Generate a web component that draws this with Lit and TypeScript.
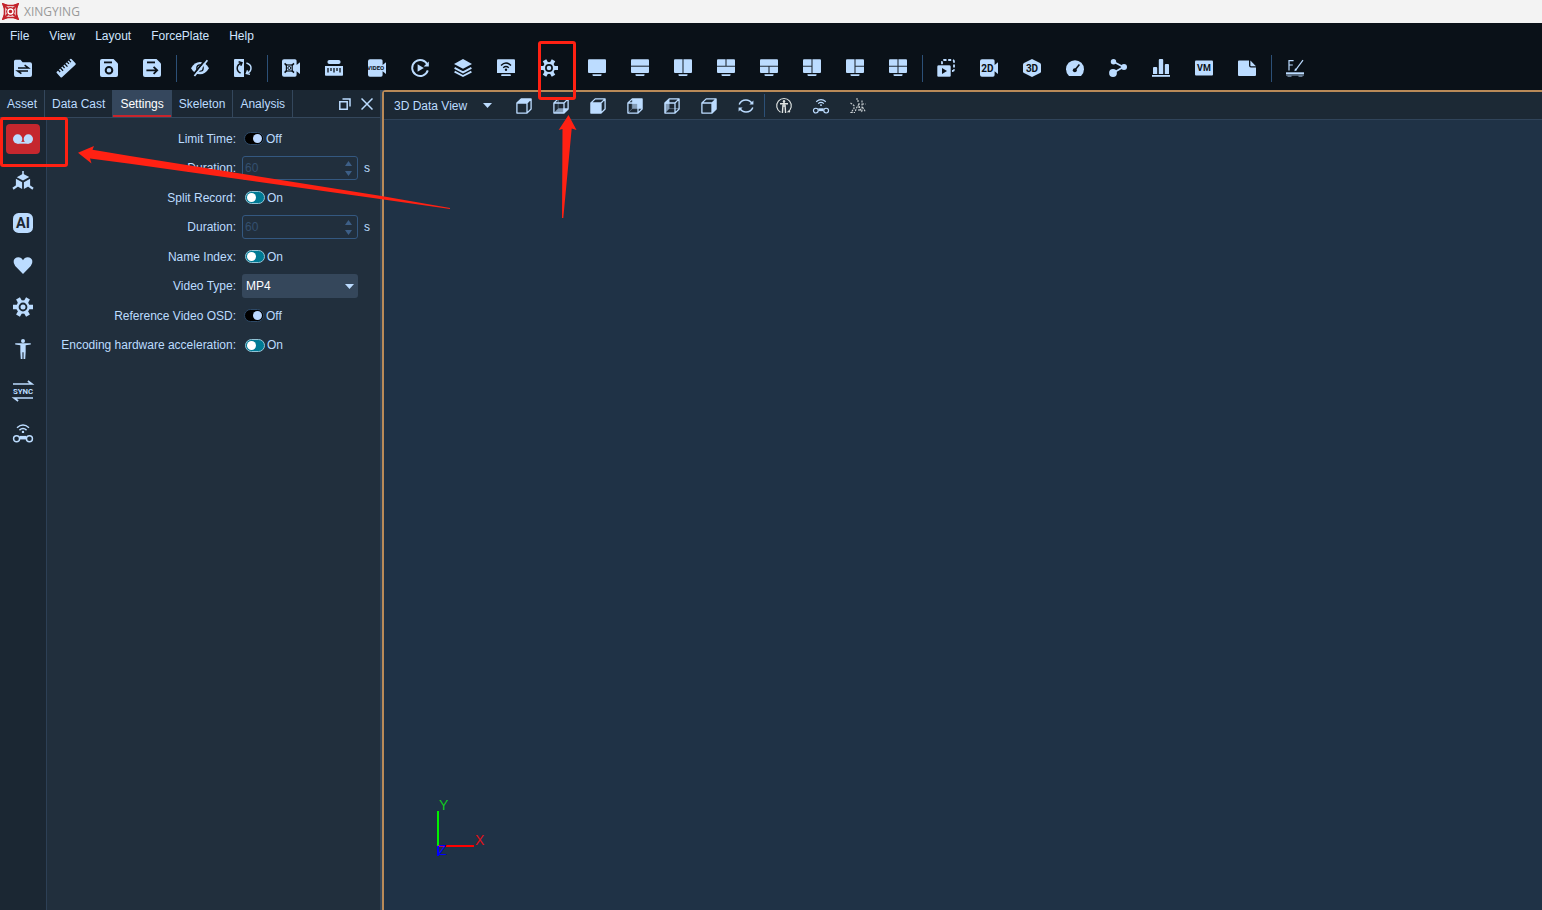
import { LitElement, html, svg, css, nothing, TemplateResult } from "lit";
import { customElement, property } from "lit/decorators.js";
import { classMap } from "lit/directives/class-map.js";

const gear = svg`
  <circle cx="9" cy="9" r="6" fill="currentColor"/>
  <g stroke="currentColor" stroke-width="4" stroke-linejoin="round">
    <path d="M0 9H18M4.5 1.2L13.5 16.8M13.5 1.2L4.5 16.8"/>
  </g>
  <circle cx="9" cy="9" r="3.1" fill="currentColor" stroke="var(--hole)" stroke-width="1.7"/>`;

const monitor = (lines: string) => svg`
  <rect y="0.3" width="18" height="13.7" rx="1" fill="currentColor"/>
  <path d="${lines}" stroke="var(--hole)" stroke-width="1.1" opacity=".85"/>
  <path d="M4.5 15.2h9v0.8q0 1-1 1h-7q-1 0-1-1z" fill="currentColor"/>`;

const cameraBody = svg`<path d="M2 0.2h11q1.600 0 1.600 1.600V6L18 3.200V15l-3.400-2.800V16q0 1.800-1.600 1.800H2q-2 0-2-2V2.200Q0 .2 2 .2z" fill="currentColor"/>`;

const linkedBalls = svg`
  <path d="M3.600 4.200Q9-.6 14.400 4.200M5.800 6.400Q9 3.600 12.200 6.400" fill="none" stroke="currentColor" stroke-width="1.300"/>
  <circle cx="9" cy="8" r="1.100" fill="currentColor"/>
  <path d="M6 11.600h6v3.200H6z" fill="currentColor"/>
  <g fill="var(--hole)" stroke="currentColor" stroke-width="1.300">
    <circle cx="3.200" cy="14.200" r="2.700"/><circle cx="14.800" cy="14.200" r="2.700"/>
  </g>`;

const cubeEdges = svg`<path d="M.9 5L5.200.9H15.100V11L11 15.100H.9zM.9 5H11V15M11 5L15.100.9" fill="none" stroke="currentColor" stroke-width="1.300" stroke-linejoin="round"/>`;
const cube = (face: string) => svg`<path d="${face}" fill="currentColor"/>${cubeEdges}`;
const glassCube = (face: string) => svg`
  <path d="${face}" fill="currentColor"/>
  <path d="M5.200 1v9.600H15M5.200 10.600L1 15" stroke="currentColor" fill="none" opacity=".5"/>
  <path d="M1.500 5.500H10.500V14.500H1.500z" fill="var(--hole)" opacity=".35"/>
  ${cubeEdges}`;

const icons: Record<string, TemplateResult> = {
  folder: svg`
    <path d="M1.500.8h5L8.600 3.200H16q2 0 2 2V16q0 2-2 2H2q-2 0-2-2V2.300Q0 .8 1.500.8z" fill="currentColor"/>
    <path d="M4 8.900h10.400L10.600 6.200M14 11.900H3.600L7.400 14.600" fill="none" stroke="var(--hole)" stroke-width="1.500"/>`,
  ruler: svg`
    <g transform="rotate(-43 9 9)">
      <rect x="-1.200" y="5.400" width="20.400" height="7.600" rx="1" fill="currentColor"/>
      <path d="M2 5v3M5 5v4M8 5v3M11 5v4M14 5v3M16.600 5v3" stroke="var(--hole)" stroke-width="1.300"/>
    </g>`,
  save: svg`
    <path d="M2 0h11.500L18 4.500V16q0 2-2 2H2q-2 0-2-2V2Q0 0 2 0z" fill="currentColor"/>
    <path d="M4 3.400h8" stroke="var(--hole)" stroke-width="1.800"/>
    <circle cx="9" cy="11.300" r="3.300" fill="none" stroke="var(--hole)" stroke-width="2"/>`,
  saveAs: svg`
    <path d="M2 0h11.500L18 4.500V16q0 2-2 2H2q-2 0-2-2V2Q0 0 2 0z" fill="currentColor"/>
    <path d="M4 3.400h8" stroke="var(--hole)" stroke-width="1.800"/>
    <path d="M3.400 11.300H14M10.600 7.800l3.600 3.500-3.600 3.500" fill="none" stroke="var(--hole)" stroke-width="1.800"/>`,
  hidden: svg`
    <path d="M0 9.200Q3.600 3 9 3q5.400 0 9 6.200-3.600 6-9 6-5.400 0-9-6z" fill="currentColor"/>
    <circle cx="9" cy="9" r="3.200" fill="none" stroke="var(--hole)" stroke-width="1.300"/>
    <path d="M2 16.200L14.600.6" stroke="var(--hole)" stroke-width="2"/>
    <path d="M3.400 17L16.400 1.200" stroke="currentColor" stroke-width="1.800"/>`,
  flip: svg`
    <path d="M1 0h9v18H1q-1 0-1-1V1q0-1 1-1z" fill="currentColor"/>
    <path d="M7.600 4Q3.200 5.400 3.200 9.200q0 3.400 3.400 4.800M4.600 2.800l3.400 1-1.200 3" fill="none" stroke="var(--hole)" stroke-width="1.500"/>
    <path d="M12.400 4Q17 5.400 17 9q0 3.800-4 5.200M16 15.400l-3.600-1 1.200-3" fill="none" stroke="currentColor" stroke-width="1.500"/>`,
  calibrate: svg`${cameraBody}
    <path d="M2.600 4.400L12 13.600M12 4.400L2.600 13.600" stroke="var(--hole)" stroke-width="1.500"/>
    <rect x="4.400" y="6" width="5.800" height="6" fill="currentColor" stroke="var(--hole)" stroke-width="1.200"/>
    <circle cx="7.300" cy="9" r="1.500" fill="currentColor" stroke="var(--hole)" stroke-width="1"/>`,
  caliper: svg`
    <rect x="2.400" y="1" width="13.200" height="4" rx="2" fill="currentColor"/>
    <path d="M0 7h18v9q0 .8-.8.8H.8Q0 16.800 0 16z" fill="currentColor"/>
    <path d="M3 9v4.500M6 9v3M9 9v4.500M12 9v3M15 9v4.500" stroke="var(--hole)" stroke-width="1.300"/>`,
  video: svg`${cameraBody}<text class="glyph" x="7.600" y="11.300" font-size="6">VIDEO</text>`,
  replay: svg`
    <path d="M16.600 6A8 8 0 1 0 16.800 11.400" fill="none" stroke="currentColor" stroke-width="1.900"/>
    <path d="M17.800 2.400V7.600H12.600z" fill="currentColor"/>
    <path d="M6.600 5.200L12.800 9l-6.200 3.800z" fill="currentColor"/>`,
  layers: svg`
    <path d="M9 0l9 4.900-9 4.900L0 4.900z" fill="currentColor"/>
    <path d="M.6 8.900L9 13.400l8.400-4.500M.6 12.700L9 17l8.400-4.300" fill="none" stroke="currentColor" stroke-width="1.900"/>`,
  wireless: svg`
    <path d="M1 .3h16q1 0 1 1V14H0V1.300Q0 .3 1 .3z" fill="currentColor"/>
    <path d="M4 6.400Q9 1.600 14 6.400M6.200 8.800q2.800-2.400 5.600 0" fill="none" stroke="var(--hole)" stroke-width="1.400"/>
    <circle cx="9" cy="10.800" r="1.200" fill="var(--hole)"/>
    <path d="M5 16.200h8" stroke="currentColor" stroke-width="1.700" stroke-linecap="round"/>`,
  gear,
  view1: monitor("M0 0"),
  view2h: monitor("M0 7.200H18"),
  view2v: monitor("M9 0V14"),
  view3t: monitor("M0 7.200H18M9 0V7"),
  view3b: monitor("M0 7.200H18M9 7V14"),
  view3l: monitor("M9 0V14M0 7.200H9"),
  view3r: monitor("M9 0V14M9 7.200H18"),
  view4: monitor("M9 0V14M0 7.200H18"),
  clip: svg`
    <rect x="5" y="1" width="12" height="11" rx="1.500" fill="none" stroke="currentColor" stroke-width="1.800" stroke-dasharray="3 1.700"/>
    <rect y="6" width="14" height="12" rx="1.600" fill="currentColor" stroke="var(--hole)" stroke-width=".6"/>
    <path d="M5 9l5 3-5 3z" fill="var(--hole)"/>`,
  cam2d: svg`${cameraBody}<text class="glyph" x="7.400" y="12.600" font-size="10">2D</text>`,
  hex3d: svg`
    <path d="M9 0l8 4q1 .6 1 1.600v6.800q0 1-1 1.600l-8 4-8-4q-1-.6-1-1.600V5.600Q0 4.600 1 4z" fill="currentColor"/>
    <text class="glyph" x="9" y="12.600" font-size="10">3D</text>`,
  gauge: svg`
    <path d="M3 17Q0 14 0 10.200A9 9 0 0 1 18 10.200Q18 14 15 17z" fill="currentColor"/>
    <path d="M9 11l4.400-5.400" stroke="var(--hole)" stroke-width="1.600"/>
    <circle cx="8.800" cy="11.200" r="2" fill="var(--hole)"/>`,
  share: svg`
    <path d="M4.600 2.800L14.400 8 4 14" fill="none" stroke="currentColor" stroke-width="1.700"/>
    <circle cx="4.500" cy="2.800" r="2.700" fill="currentColor"/>
    <circle cx="15" cy="8" r="3" fill="currentColor"/>
    <circle cx="4" cy="14" r="3.900" fill="currentColor"/>`,
  bars: svg`
    <path d="M1 9q0-1 1-1h2.200q1 0 1 1v6H1zM6.800 1q0-1 1-1h2.400q1 0 1 1v14H6.800zM12.800 6q0-1 1-1H16q1 0 1 1v9h-4.200z" fill="currentColor"/>
    <path d="M0 16.900h18" stroke="currentColor" stroke-width="1.800"/>`,
  vm: svg`
    <rect y="1.500" width="18" height="15" rx="1" fill="currentColor"/>
    <text class="glyph" x="9" y="12.400" font-size="9">VM</text>`,
  note: svg`
    <path d="M1 1.500h10v5q0 2 2 2h5V16q0 1-1 1H1q-1 0-1-1V2.500q0-1 1-1z" fill="currentColor"/>
    <path d="M12.400 1.500L18 7.200h-5q-.6 0-.6-.6z" fill="currentColor"/>`,
  force: svg`
    <path d="M3 11.600V1.600H7.600M3 6h3.800" fill="none" stroke="currentColor" stroke-width="1.200"/>
    <path d="M9.400 11.400L17 1.200" stroke="currentColor" stroke-width="1.200"/>
    <path d="M8.400 12.200l.6-3 2.200 1.700z" fill="currentColor"/>
    <path d="M0 14.200h18" stroke="currentColor" stroke-width="1.800"/>
    <path d="M0 16h18M1.500 17.200h4M12.500 17.200h4" stroke="currentColor" stroke-width="1.400" opacity=".5"/>`,
  record: svg`
    <circle cx="4.200" cy="9" r="4.200" fill="currentColor"/><circle cx="13.800" cy="9" r="4.200" fill="currentColor"/>
    <path d="M4 12.400h10" stroke="currentColor" stroke-width="1.600"/>`,
  body: svg`
    <path d="M9 0v4" stroke="currentColor" stroke-width="1.400"/>
    <path d="M9 2.400l5.600 3L9 8.600l-5.600-3z" fill="currentColor"/>
    <path d="M2.600 7l5.600 3.200v6L2.600 13zM15.400 7L9.800 10.200v6l5.600-3.200z" fill="currentColor"/>
    <path d="M0 16l4-2.800M18 16l-4-2.800" stroke="currentColor" stroke-width="2"/>`,
  ai: svg`
    <rect width="18" height="18" rx="5" fill="currentColor"/>
    <text class="glyph" x="9" y="13.600" font-size="13">AI</text>`,
  heart: svg`<path d="M9 17L2 9.800Q.2 7.800.6 5.200 1.400 2 4.800 2 7.600 2 9 4.800 10.400 2 13.200 2q3.400 0 4.200 3.200.4 2.600-1.400 4.600z" fill="currentColor"/>`,
  person: svg`
    <circle cx="9" cy="1.700" r="1.800" fill="currentColor"/>
    <path d="M2 3.800h14v1.200l-4.600.6v6L11 18H9.500V12h-1v6H7l-.4-6.400v-6L2 5z" fill="currentColor"/>`,
  sync: svg`
    <path d="M0 2.700h17L13.400 0M18 15.300H1l3.600 2.700" fill="none" stroke="currentColor" stroke-width="1.500"/>
    <text class="glyph light" x="9" y="11.600" font-size="7">SYNC</text>`,
  balls: linkedBalls,
  cubeTop: cube("M1 5L5.200 1H15l-4 4z"),
  cubeBottom: glassCube("M1 15l4.200-4.400H15L11 15z"),
  cubeFront: cube("M1 5H11V15H1z"),
  cubeBack: glassCube("M5.200 1H15V10.600H5.200z"),
  cubeLeft: glassCube("M1 5L5.200 1V10.600L1 15z"),
  cubeRight: cube("M11 5l4-4V11l-4 4z"),
  refresh: svg`
    <path d="M1.200 6.600Q3 2 8 2q3.800 0 6 3.400M14.800 9.400Q13 14 8 14q-3.800 0-6-3.400" fill="none" stroke="currentColor" stroke-width="1.500"/>
    <path d="M15.400 2.400v4h-4zM.6 13.600v-4h4z" fill="currentColor"/>`,
  skeleton: svg`
    <g fill="none" stroke="#dfe3e2">
      <path d="M4.500 14.200A7.300 7.300 0 1 1 11.500 14.200" stroke-width="1.100"/>
      <path d="M4 5.800h8M8 3v6" stroke-width="1.400"/>
      <path d="M7 6.500L6.400 15M9 6.500L9.600 15" stroke-width="1.400"/>
    </g>
    <circle cx="8" cy="3.200" r="1.200" fill="#dfe3e2"/><circle cx="13.200" cy="13.600" r="1" fill="#dfe3e2"/>`,
  markers: svg`
    <g fill="none" stroke="#cdd3d6" stroke-width="1.100" stroke-dasharray="2 1">
      <path d="M.5 5l3.500 2.500v3L1 14.500h4M6 1h2v3M9 5v9M9 6L6.500 10 5 14M9 8l2.500 6M12 2.500v12M12 6h3.500M12.500 9l3 5"/>
    </g>`,
};

@customElement("tool-icon")
export class ToolIcon extends LitElement {
  static styles = css`
    :host { display: block; line-height: 0; }
    svg { display: block; overflow: visible; }
    .glyph {
      font-family: Roboto, sans-serif;
      font-weight: bold;
      text-anchor: middle;
      fill: var(--hole);
    }
    .light { fill: currentColor; }
  `;
  @property() name = "";
  @property({ type: Number }) size = 18;
  @property({ type: Number }) box = 18;
  render() {
    return html`<svg aria-hidden="true" width=${this.size} height=${this.size} viewBox="0 0 ${this.box} ${this.box}">${icons[this.name]}</svg>`;
  }
}

const caret = html`<svg class="caret" aria-hidden="true" width="9" height="5" viewBox="0 0 9 5"><path d="M0 0H9L4.500 5z" fill="currentColor"/></svg>`;

@customElement("settings-form")
export class SettingsForm extends LitElement {
  static styles = css`
    :host { display: block; color: #bcdcff; background: #212f3d; }
    form {
      display: grid;
      grid-template-columns: 1fr 116px 10px;
      grid-auto-rows: 1fr;
      align-items: center;
      column-gap: 6px;
      height: 236px;
      padding: 6px 6px 0 4px;
    }
    .name { grid-column: 1; text-align: right; white-space: nowrap; }
    .switch { display: flex; align-items: center; gap: 2px; padding-left: 2px; }
    .switch.on { padding-left: 3px; }
    .toggle {
      appearance: none;
      display: flex;
      align-items: center;
      justify-content: flex-end;
      width: 20px;
      height: 13px;
      margin: 0;
      padding: 0 1px;
      box-sizing: border-box;
      border: 1px solid #2d4967;
      border-radius: 7px;
      background: #000;
    }
    .toggle::before { content: ""; width: 9px; height: 9px; border-radius: 5px; background: #bcd8ff; }
    .toggle:checked { justify-content: flex-start; border-color: #93c4d6; background: #007a94; }
    .toggle:checked::before { background: #fff; }
    .number {
      display: flex;
      height: 24px;
      box-sizing: border-box;
      border: 1px solid #345880;
      border-radius: 3px;
    }
    .number input {
      flex: 1;
      min-width: 0;
      appearance: textfield;
      border: 0;
      padding: 0 0 0 2px;
      background: none;
      font: inherit;
      color: #34506f;
    }
    .steps { display: flex; flex-direction: column; justify-content: center; gap: 5px; padding-right: 5px; }
    .steps button { display: block; padding: 0; border: 0; background: none; color: #3d5f87; line-height: 0; }
    .choice { display: grid; align-items: center; height: 24px; border-radius: 3px; background: #35475b; }
    .choice select {
      grid-area: 1 / 1;
      appearance: none;
      height: 24px;
      border: 0;
      padding: 0 4px;
      background: none;
      color: #fff;
      font: inherit;
    }
    .caret { grid-area: 1 / 1; justify-self: end; margin-right: 4px; pointer-events: none; }
  `;

  private toggle(id: string, text: string, on: boolean) {
    return html`
      <label class="name" for=${id}>${text}:</label>
      <span class=${classMap({ switch: true, on })}>
        <input class="toggle" id=${id} type="checkbox" .checked=${on} />
        <label for=${id}>${on ? "On" : "Off"}</label>
      </span>`;
  }

  private duration(id: string) {
    return html`
      <label class="name" for=${id}>Duration:</label>
      <span class="number">
        <input id=${id} type="number" value="60" disabled />
        <span class="steps">
          <button type="button" disabled aria-label="Increase"><svg width="7" height="5" viewBox="0 0 7 5"><path d="M0 5H7L3.500 0z" fill="currentColor"/></svg></button>
          <button type="button" disabled aria-label="Decrease"><svg width="7" height="5" viewBox="0 0 7 5"><path d="M0 0H7L3.500 5z" fill="currentColor"/></svg></button>
        </span>
      </span>
      <span>s</span>`;
  }

  render() {
    return html`<form>
      ${this.toggle("limit", "Limit Time", false)}
      ${this.duration("limit-duration")}
      ${this.toggle("split", "Split Record", true)}
      ${this.duration("split-duration")}
      ${this.toggle("index", "Name Index", true)}
      <label class="name" for="type">Video Type:</label>
      <span class="choice"><select id="type"><option>MP4</option></select>${caret}</span>
      ${this.toggle("osd", "Reference Video OSD", false)}
      ${this.toggle("encoding", "Encoding hardware acceleration", true)}
    </form>`;
  }
}

const toolGroups: [string, string][][] = [
  [["folder", "Switch project"], ["ruler", "Measure"], ["save", "Save"], ["saveAs", "Save as"]],
  [["hidden", "Hide"], ["flip", "Flip"]],
  [["calibrate", "Calibrate"], ["caliper", "Caliper"], ["video", "Video"], ["replay", "Replay"], ["layers", "Layers"], ["wireless", "Broadcast"], ["gear", "Settings"]],
  [["view1", "Single view"], ["view2h", "Two rows"], ["view2v", "Two columns"], ["view3t", "Split top"], ["view3b", "Split bottom"], ["view3l", "Split left"], ["view3r", "Split right"], ["view4", "Four views"]],
  [["clip", "Clips"], ["cam2d", "2D view"], ["hex3d", "3D view"], ["gauge", "Gauge"], ["share", "Graph"], ["bars", "Chart"], ["vm", "VM"], ["note", "Notes"]],
  [["force", "Force plate"]],
];

const railItems: [string, string][] = [
  ["record", "Record"], ["body", "Rigid body"], ["ai", "AI"], ["heart", "Health"],
  ["gear", "General"], ["person", "Human"], ["sync", "Sync"], ["balls", "Wand"],
];

const viewGroups: [string, string, number][][] = [
  [["cubeTop", "Top", 16], ["cubeBottom", "Bottom", 16], ["cubeFront", "Front", 16], ["cubeBack", "Back", 16], ["cubeLeft", "Left", 16], ["cubeRight", "Right", 16], ["refresh", "Reset", 16]],
  [["skeleton", "Skeleton", 16], ["balls", "Wand", 18], ["markers", "Markers", 16]],
];

@customElement("app-root")
export class AppRoot extends LitElement {
  static styles = css`
    :host {
      --hole: #0a1118;
      display: flex;
      flex-direction: column;
      position: relative;
      min-height: 100vh;
      overflow: hidden;
      background: #0a1118;
      color: #bcdcff;
      font: 12px/16px "Liberation Sans", Arial, sans-serif;
    }
    button { padding: 0; border: 0; background: none; color: inherit; font: inherit; }
    .title {
      display: flex;
      align-items: center;
      gap: 5px;
      height: 23px;
      padding-left: 2px;
      background: #f3f3f3;
      color: #999;
      font-family: "Open Sans", sans-serif;
    }
    .menu { display: flex; height: 25px; }
    .menu button { padding: 0 10px; color: #d0e5ff; }
    .tools { display: flex; align-items: center; height: 40px; padding: 0 0 2px 1px; }
    .tools button { padding: 11px 12px 11px 13px; }
    .tools hr { width: 1px; height: 27px; margin: 0 1px 0 3px; border: 0; background: #2c5077; }
    .work { flex: 1; display: grid; grid-template-columns: 380px 1fr; column-gap: 2px; background: #33465a; }
    .dock { display: flex; flex-direction: column; background: #1b2733; }
    .tabs { display: flex; height: 27px; border-bottom: 1px solid #34475c; }
    .tabs .tab { padding: 0 7px; border-right: 1px solid #34475c; }
    .tabs .active { color: #fff; background: #35475d; box-shadow: inset 0 -2px #c9252c; }
    .controls { display: flex; align-items: center; gap: 10px; margin-left: auto; padding-right: 7px; }
    .controls button { line-height: 0; }
    .columns { flex: 1; display: flex; }
    .rail { --hole: #1b2733; display: flex; flex-direction: column; gap: 12px; padding: 6px; border-right: 1px solid #2d4056; }
    .rail button { display: grid; place-items: center; width: 34px; height: 30px; border-radius: 4px; }
    .rail .active { background: #c5272e; }
    .columns settings-form { flex: 1; }
    .view {
      --hole: #1c2935;
      display: flex;
      flex-direction: column;
      border: 2px solid #b98a58;
      border-width: 2px 0 0 2px;
      border-top-left-radius: 4px;
      background: #1f3246;
    }
    .view-bar { display: flex; align-items: center; height: 27px; padding-left: 10px; border-bottom: 1px solid #30445a; background: #1c2935; }
    .picker { display: grid; align-items: center; width: 98px; margin-right: 13px; }
    .picker select { grid-area: 1 / 1; appearance: none; border: 0; padding: 0; background: none; color: inherit; font: inherit; }
    .caret { grid-area: 1 / 1; justify-self: end; pointer-events: none; }
    .view-bar button { width: 37px; padding-left: 11px; }
    .view-bar hr { width: 1px; height: 23px; margin: 0; border: 0; background: #2c5077; }
    .scene { flex: 1; display: flex; align-items: flex-end; padding: 0 0 52px 51px; }
    .axes { font-size: 14px; }
    .marks { position: absolute; inset: 0; width: 100%; height: 100%; pointer-events: none; }
  `;

  render() {
    const tabs = ["Asset", "Data Cast", "Settings", "Skeleton", "Analysis"];
    return html`
      <header class="title">
        <svg aria-hidden="true" width="17" height="17" viewBox="0 0 17 17">
          <path d="M1 1l4 1.500h7L16 1l-1.500 4v7L16 16l-4-1.500H5L1 16l1.500-4V5z" fill="#f3f3f3" stroke="#c3222b" stroke-width="1.600"/>
          <path d="M0 0l6 2-4 4zM17 0l-6 2 4 4zM0 17l6-2-4-4zM17 17l-6-2 4-4z" fill="#c3222b"/>
          <circle cx="8.500" cy="8.500" r="4.400" fill="#c3222b"/>
          <path d="M4 4l9 9M13 4l-9 9" stroke="#c3222b" stroke-width="2"/>
          <circle cx="8.500" cy="8.500" r="2.500" fill="#c3222b" stroke="#fff" stroke-width="1.400"/>
        </svg>
        <span>XINGYING</span>
      </header>
      <nav class="menu">
        ${["File", "View", "Layout", "ForcePlate", "Help"].map((m) => html`<button>${m}</button>`)}
      </nav>
      <div class="tools">
        ${toolGroups.map((group, i) => html`${i ? html`<hr />` : nothing}${group.map(
          ([name, label]) => html`<button aria-label=${label}><tool-icon name=${name}></tool-icon></button>`)}`)}
      </div>
      <main class="work">
        <section class="dock">
          <div class="tabs">
            ${tabs.map((t) => html`<button class=${classMap({ tab: true, active: t === "Settings" })}>${t}</button>`)}
            <div class="controls">
              <button aria-label="Float">
                <svg width="12" height="12" viewBox="0 0 12 12"><path d="M.8 3.800h7.400v7.400H.8zM3.500 1h7.500v7.500" fill="none" stroke="currentColor" stroke-width="1.500"/></svg>
              </button>
              <button aria-label="Close">
                <svg width="12" height="12" viewBox="0 0 12 12"><path d="M.5.500l11 11M11.500.500l-11 11" stroke="currentColor" stroke-width="1.500"/></svg>
              </button>
            </div>
          </div>
          <div class="columns">
            <nav class="rail">
              ${railItems.map(([name, label], i) => html`
                <button class=${classMap({ active: i === 0 })} aria-label=${label}>
                  <tool-icon name=${name} size="20"></tool-icon>
                </button>`)}
            </nav>
            <settings-form></settings-form>
          </div>
        </section>
        <section class="view">
          <div class="view-bar">
            <span class="picker"><select aria-label="View"><option>3D Data View</option></select>${caret}</span>
            ${viewGroups.map((group, i) => html`${i ? html`<hr />` : nothing}${group.map(
              ([name, label, box]) => html`<button aria-label=${label}><tool-icon name=${name} size="16" box=${box}></tool-icon></button>`)}`)}
          </div>
          <div class="scene">
            <svg class="axes" role="img" aria-label="Axes" width="52" height="60" viewBox="0 0 52 60">
              <path d="M3 13V48" stroke="#00f000" stroke-width="2"/>
              <path d="M3 48H39" stroke="#f00" stroke-width="2"/>
              <path d="M3 48V58" stroke="#00f" stroke-width="2"/>
              <text x="4" y="12" fill="#12c822">Y</text>
              <text x="40" y="47" fill="#e01018">X</text>
              <text x="3" y="57" fill="#00f">Z</text>
            </svg>
          </div>
        </section>
      </main>
      <svg class="marks" aria-hidden="true">
        <g fill="none" stroke="#ff2113" stroke-width="3">
          <rect x="1.500" y="118.500" width="65" height="47" rx="1.500"/>
          <rect x="539.500" y="42.500" width="35" height="56" rx="1.500"/>
        </g>
        <g fill="#ff2113">
          <path d="M78 152.700L94 146l-1.500 3.800L130 156l250 39.800 70 12.200v1L380 199 130 163.800 90 158.500l1.500 5z"/>
          <path d="M568.500 115l8 15-4.800-1.500L563.300 218h-1.300l.5-89-3.800 1z"/>
        </g>
      </svg>`;
  }
}
